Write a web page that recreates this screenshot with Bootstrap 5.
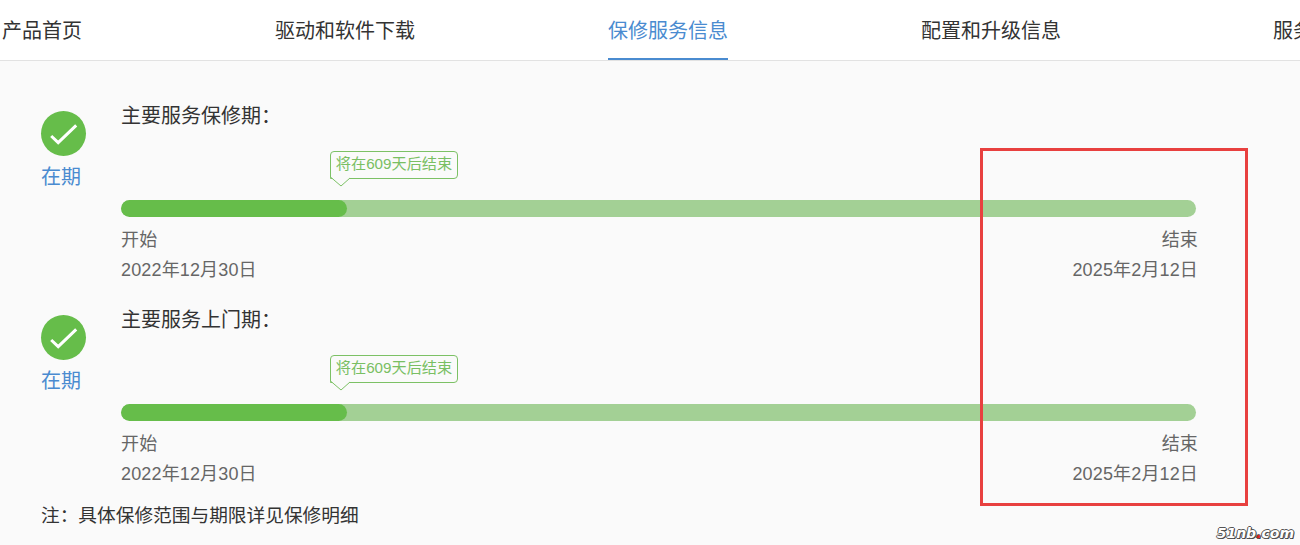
<!DOCTYPE html>
<html lang="zh-CN">
<head>
  <meta charset="UTF-8" />
  <meta name="viewport" content="width=device-width, initial-scale=1.0"/>
  <title>保修服务信息</title>
  <link href="https://cdn.jsdelivr.net/npm/bootstrap@5.3.2/dist/css/bootstrap.min.css" rel="stylesheet">
  <style>
    html, body { height: 545px; overflow: hidden; }
    body {
      background-color: #fafafa;
      color: #333;
      font-family: "Liberation Sans", "Noto Sans CJK SC", sans-serif;
      font-size: 20px;
    }
    .tab-bar {
      height: 61px;
      background: #fff;
      border-bottom: 1px solid #e2e2e2;
      padding-left: 2px;
      gap: 193px;
      white-space: nowrap;
      overflow: hidden;
    }
    .tab-item { height: 60px; line-height: 62px; color: #333; }
    .tab-item.on { color: #4a8bd0; border-bottom: 2px solid #4a8bd0; }
    .tab-item.last { margin-left: 19px; }
    .warranty { padding: 40px 0 0 41px; }
    .warranty-row { height: 204px; }
    .state-col { width: 80px; padding-top: 10px; }
    .state-icon {
      width: 45px;
      height: 45px;
      border-radius: 50%;
      background: #66bd4a;
    }
    .state-text { color: #4a8bd0; line-height: 30px; margin-top: 6px; }
    .detail-col { width: 1075px; }
    .detail-title { line-height: 30px; }
    .bubble-wrap { height: 69px; padding: 20px 0 0 209px; }
    .bubble {
      position: relative;
      width: 128px;
      height: 28px;
      border: 1px solid #7cc165;
      border-radius: 4px;
      border-bottom-left-radius: 0;
      color: #79bf63;
      font-size: 15.2px;
      line-height: 24px;
      text-align: center;
    }
    .bubble-tail { position: absolute; left: -1px; top: 20px; }
    .time-bar { height: 17px; background: #a3d095; border-radius: 9px; overflow: hidden; }
    .time-fill { width: 226px; height: 100%; background: #66bd4a; border-radius: 9px; }
    .time-labels { color: #666; font-size: 18px; line-height: 30px; padding-top: 8px; letter-spacing: .15px; }
    .time-end { margin-right: -2px; }
    .note { font-size: 18.7px; line-height: 30px; margin-top: -8px; }
    .red-box {
      position: absolute;
      left: 980px;
      top: 148px;
      width: 268px;
      height: 358px;
      border: 3px solid #e8403f;
    }
    .watermark {
      position: absolute;
      right: 6px;
      bottom: 2px;
      font-family: "DejaVu Sans", sans-serif;
      font-size: 14px;
      font-style: italic;
      font-weight: 700;
      line-height: 20px;
      color: #fff;
      text-shadow: 1px 0 #555, -1px 0 #555, 0 1px #555, 0 -1px #555, 1px 1px #333;
    }
    .watermark span { color: #e8201c; }
  </style>
</head>
<body>

  <!-- Tabs -->
  <nav class="tab-bar d-flex">
    <div class="tab-item">产品首页</div>
    <div class="tab-item">驱动和软件下载</div>
    <div class="tab-item on">保修服务信息</div>
    <div class="tab-item">配置和升级信息</div>
    <div class="tab-item last">服务</div>
  </nav>

  <main class="warranty">
    <div class="warranty-row d-flex">
      <div class="state-col">
        <div class="state-icon d-flex align-items-center justify-content-center">
          <svg width="29" height="23" viewBox="0 0 29 23" fill="none" stroke="#fff" stroke-width="3"><path d="M2.200 14l7 6.700L27.200 3.300"/></svg>
        </div>
        <div class="state-text">在期</div>
      </div>
      <div class="detail-col">
        <div class="detail-title">主要服务保修期：</div>
        <div class="bubble-wrap">
          <div class="bubble">将在609天后结束
            <svg class="bubble-tail" width="24" height="16" viewBox="0 0 24 16" fill="#fafafa" stroke="#7cc165"><path d="M.5 0V5L11 14 20 6"/></svg>
          </div>
        </div>
        <div class="time-bar"><div class="time-fill"></div></div>
        <div class="time-labels d-flex justify-content-between">
          <div>开始<br>2022年12月30日</div>
          <div class="text-end time-end">结束<br>2025年2月12日</div>
        </div>
      </div>
    </div>
    <div class="warranty-row d-flex">
      <div class="state-col">
        <div class="state-icon d-flex align-items-center justify-content-center">
          <svg width="29" height="23" viewBox="0 0 29 23" fill="none" stroke="#fff" stroke-width="3"><path d="M2.200 14l7 6.700L27.200 3.300"/></svg>
        </div>
        <div class="state-text">在期</div>
      </div>
      <div class="detail-col">
        <div class="detail-title">主要服务上门期：</div>
        <div class="bubble-wrap">
          <div class="bubble">将在609天后结束
            <svg class="bubble-tail" width="24" height="16" viewBox="0 0 24 16" fill="#fafafa" stroke="#7cc165"><path d="M.5 0V5L11 14 20 6"/></svg>
          </div>
        </div>
        <div class="time-bar"><div class="time-fill"></div></div>
        <div class="time-labels d-flex justify-content-between">
          <div>开始<br>2022年12月30日</div>
          <div class="text-end time-end">结束<br>2025年2月12日</div>
        </div>
      </div>
    </div>
    <div class="note">注：具体保修范围与期限详见保修明细</div>
  </main>

  <div class="red-box"></div>
  <div class="watermark">51nb<span>.</span>com</div>

  <script src="https://cdn.jsdelivr.net/npm/bootstrap@5.3.2/dist/js/bootstrap.bundle.min.js"></script>
</body>
</html>
